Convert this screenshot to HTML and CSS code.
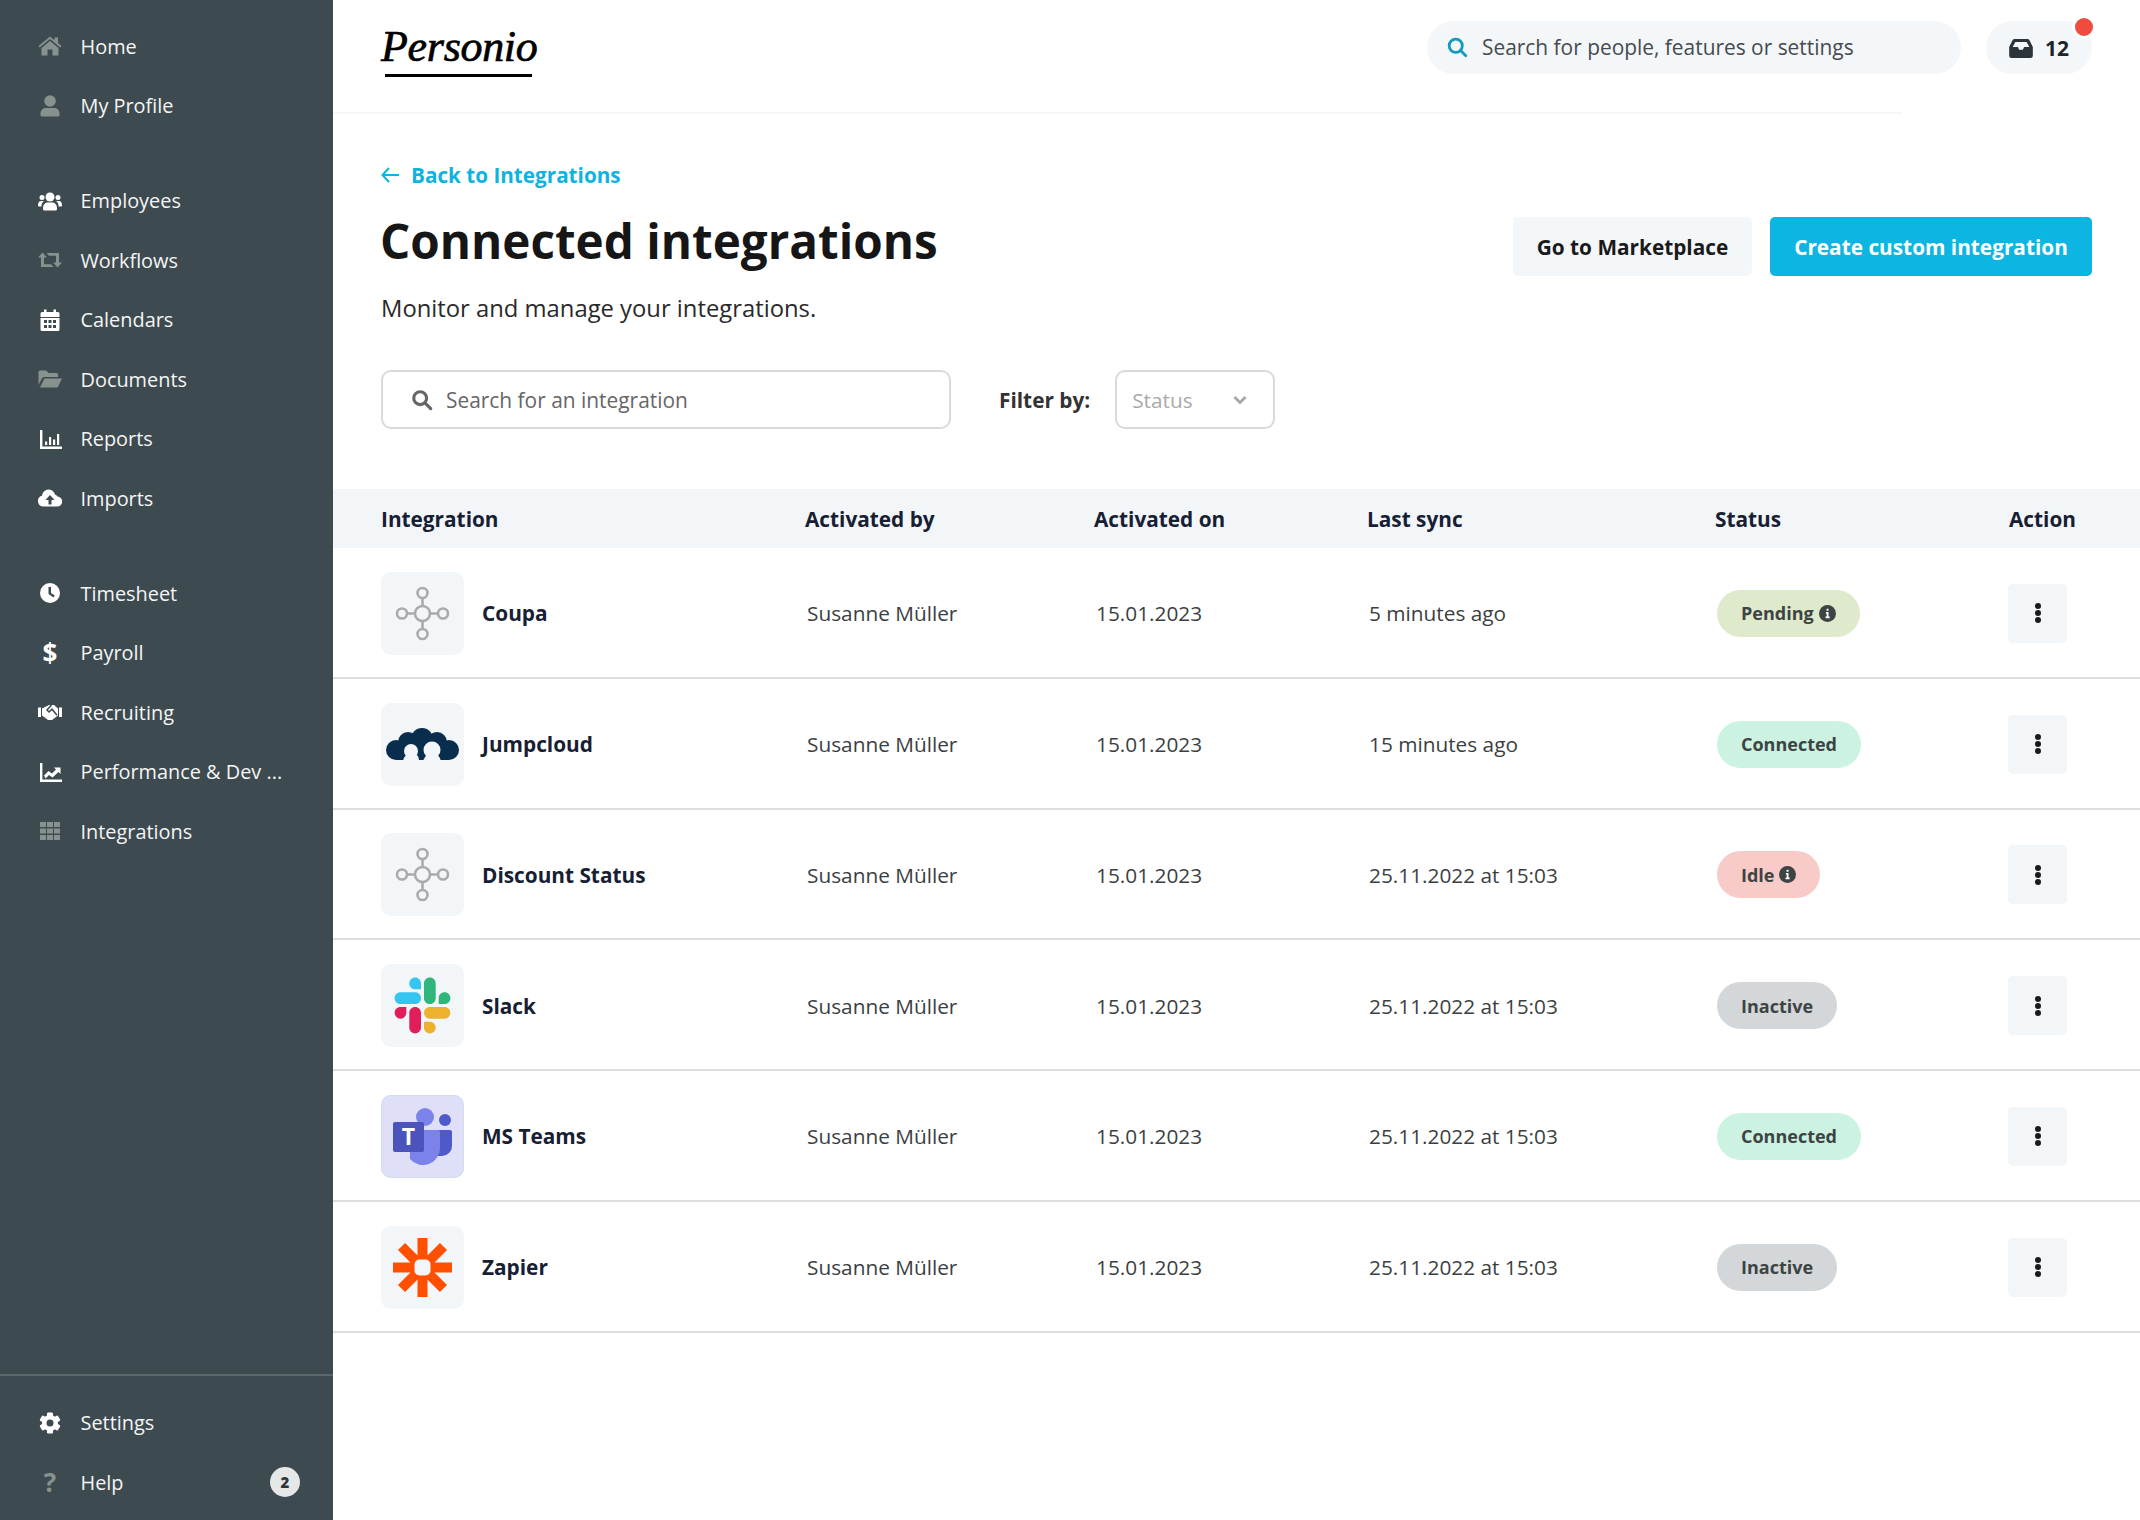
FILE: index.html
```html
<!DOCTYPE html>
<html lang="en">
<head>
<meta charset="utf-8">
<title>Connected integrations</title>
<link rel="stylesheet" href="styles.css">
</head>
<body>
<div class="app">
  <aside class="sidebar">
    <nav class="nav-main">
      <div class="nav-group">
        <a class="nav-item"><svg class="nav-icon dim" viewBox="0 0 24 24"><path d="M12 2.500 0.500 12l1.200 1.500L12 5l10.300 8.500 1.200-1.500-3.500-2.900V3.500h-3.500v2.700z"/><path d="M12 7 3.500 14v7.500h6v-6h5v6h6V14z"/></svg><span>Home</span></a>
        <a class="nav-item"><svg class="nav-icon dim" viewBox="0 0 24 24"><circle cx="12" cy="7" r="5.800"/><path d="M2.500 19.500c0-3.500 2.500-5.500 5.500-5.500h8c3 0 5.500 2 5.500 5.500V21a1.500 1.500 0 0 1-1.500 1.500H4A1.500 1.500 0 0 1 2.500 21z"/></svg><span>My Profile</span></a>
      </div>
      <div class="nav-group">
        <a class="nav-item"><svg class="nav-icon" viewBox="0 0 24 24"><circle cx="12" cy="8" r="4.500"/><circle cx="4" cy="8.500" r="2.500"/><circle cx="20" cy="8.500" r="2.500"/><path d="M5 19.500c0-3.500 2-6 4.500-6h5c2.500 0 4.500 2.500 4.500 6v.5a1.500 1.500 0 0 1-1.500 1.500h-11A1.500 1.500 0 0 1 5 20z"/><path d="M0 16.500c0-3 1-4.500 3-4.500h3a6 6 0 0 0-2.500 5.500H1a1 1 0 0 1-1-1zM24 16.500c0-3-1-4.500-3-4.500h-3a6 6 0 0 1 2.500 5.500H23a1 1 0 0 0 1-1z"/></svg><span>Employees</span></a>
        <a class="nav-item"><svg class="nav-icon dim" viewBox="0 0 24 24"><path d="M4.500 4.500 0 9.500h3v9.500h12.500l-2.500-2.800H6V9.500h3zM19.500 19.500l4.500-5h-3V5H8.500l2.500 2.800h7v6.700h-3z"/></svg><span>Workflows</span></a>
        <a class="nav-item"><svg class="nav-icon" viewBox="0 0 24 24"><path d="M6 1.500h2.500V4h7V1.500H18V4h2a1.500 1.500 0 0 1 1.500 1.500V9h-19V5.500A1.500 1.500 0 0 1 4 4h2z"/><path fill-rule="evenodd" d="M2.500 10h19v11.500A1.500 1.500 0 0 1 20 23H4a1.500 1.500 0 0 1-1.500-1.500zM6 12v3h3v-3zm4.500 0v3h3v-3zm4.500 0v3h3v-3zM6 17v3h3v-3zm4.500 0v3h3v-3zm4.500 0v3h3v-3z"/></svg><span>Calendars</span></a>
        <a class="nav-item"><svg class="nav-icon dim" viewBox="0 0 24 24"><path d="M0.500 5A1.500 1.500 0 0 1 2 3.500h6l2.500 2.500h8A1.500 1.500 0 0 1 20 7.500V10H6.500a3 3 0 0 0-2.700 1.600L0.500 18z"/><path d="M6.500 11.500H24l-4 8.300a1.500 1.500 0 0 1-1.300.7H2z"/></svg><span>Documents</span></a>
        <a class="nav-item"><svg class="nav-icon" viewBox="0 0 24 24"><path d="M2 3h2.400v16.600H24V22H2z"/><path d="M7 14.500h2.200V18H7zM11 10h2.200v8H11zM15 12.500h2.200V18H15zM19 7h2.200v11H19z"/></svg><span>Reports</span></a>
        <a class="nav-item"><svg class="nav-icon" viewBox="0 0 24 24"><path fill-rule="evenodd" d="M10 3.500a7.500 7.500 0 0 1 7 5 5.500 5.500 0 0 1 2.500 2 5 5 0 0 1-.5 10H5.500a5.500 5.500 0 0 1-1.500-10.800A7.500 7.500 0 0 1 10 3.500zM12 9 7.500 14H10.500v4.500h3V14h3z"/></svg><span>Imports</span></a>
      </div>
      <div class="nav-group">
        <a class="nav-item"><svg class="nav-icon" viewBox="0 0 24 24"><path fill-rule="evenodd" d="M12 2a10 10 0 1 1 0 20 10 10 0 0 1 0-20zM10.500 6v7l5 3.500 1.300-2-3.800-2.600V6z"/></svg><span>Timesheet</span></a>
        <a class="nav-item"><span class="nav-icon glyph">$</span><span>Payroll</span></a>
        <a class="nav-item"><svg class="nav-icon" viewBox="0 0 24 24"><path d="M0 7.500h3V17H0zM21 7.500h3V17h-3z"/><path d="M4 8.500 8 6.500 11 5h5l4 3.500v7l-6 4.500h-4l-6-4.500z"/><path class="crease" d="M13.500 5 9 10l2 2 3-2.800 5 6"/></svg><span>Recruiting</span></a>
        <a class="nav-item"><svg class="nav-icon" viewBox="0 0 24 24"><path d="M2 3h2.400v16.600H24V22H2z"/><path d="M6 15.500l4.500-4.500 3.500 2.500 4-4-2-2h6.500V14l-2-2-6 5.500-3.500-2.500-3.500 3.500z"/></svg><span>Performance &amp; Dev ...</span></a>
        <a class="nav-item"><svg class="nav-icon dim" viewBox="0 0 24 24"><path d="M2 3h6v5H2zM9 3h6v5H9zM16 3h6v5h-6zM2 9.500h6v5H2zM9 9.500h6v5H9zM16 9.500h6v5h-6zM2 16h6v5H2zM9 16h6v5H9zM16 16h6v5h-6z"/></svg><span>Integrations</span></a>
      </div>
    </nav>
    <div class="nav-bottom">
      <a class="nav-item"><svg class="nav-icon" viewBox="0 0 24 24"><g><rect x="9" y="1.500" width="6" height="21" rx="1.200"/><rect x="9" y="1.500" width="6" height="21" rx="1.200" transform="rotate(60 12 12)"/><rect x="9" y="1.500" width="6" height="21" rx="1.200" transform="rotate(120 12 12)"/></g><circle cx="12" cy="12" r="8"/><circle class="hole" cx="12" cy="12" r="3.500"/></svg><span>Settings</span></a>
      <a class="nav-item"><span class="nav-icon glyph dim-text">?</span><span>Help</span><span class="nav-badge">2</span></a>
    </div>
  </aside>

  <main class="main">
    <header class="topbar">
      <div class="logo">
        <span class="logo-word">Personio</span>
        <span class="logo-line"></span>
      </div>
      <div class="top-right">
        <div class="global-search">
          <svg class="global-search-icon" viewBox="0 0 24 24"><circle cx="10" cy="10" r="7.500"/><path d="M15.500 15.500 21.500 21.500"/></svg>
          <span>Search for people, features or settings</span>
        </div>
        <div class="inbox">
          <svg class="inbox-icon" viewBox="0 0 26 22"><path fill-rule="evenodd" d="M6 1h14a2.500 2.500 0 0 1 2.200 1.300L26 10v9.500a2.500 2.500 0 0 1-2.500 2.500h-21A2.500 2.500 0 0 1 0 19.500V10l3.800-7.700A2.500 2.500 0 0 1 6 1zm.8 3.500L3.800 10h5.700l1.500 3h4l1.500-3h5.700l-3-5.500z"/></svg>
          <span>12</span>
          <span class="inbox-dot"></span>
        </div>
      </div>
    </header>
    <div class="top-divider"></div>

    <section class="page-head">
      <a class="back-link">
        <svg class="back-icon" viewBox="0 0 18 16"><path d="M8 1 1.500 8 8 15M1.500 8H18"/></svg>
        <span>Back to Integrations</span>
      </a>
      <div class="title-row">
        <div>
          <h1 class="title">Connected integrations</h1>
          <p class="subtitle">Monitor and manage your integrations.</p>
        </div>
        <div class="actions">
          <a class="btn btn-light">Go to Marketplace</a>
          <a class="btn btn-primary">Create custom integration</a>
        </div>
      </div>
      <div class="filters">
        <div class="search-field">
          <svg class="search-field-icon" viewBox="0 0 24 24"><circle cx="10" cy="10" r="7"/><path d="M15.500 15.500 21.500 21.500"/></svg>
          <span>Search for an integration</span>
        </div>
        <span class="filter-label">Filter by:</span>
        <div class="select">
          <span>Status</span>
          <svg class="chevron" viewBox="0 0 14 10"><path d="M1.500 2 7 7.500 12.500 2"/></svg>
        </div>
      </div>
    </section>

    <section class="table">
      <div class="row row-head">
        <div>Integration</div>
        <div>Activated by</div>
        <div>Activated on</div>
        <div>Last sync</div>
        <div>Status</div>
        <div class="head-action">Action</div>
      </div>

      <div class="row">
        <div class="cell-name"><span class="logo-box"><svg viewBox="0 0 83 83"><g class="hub"><circle cx="41.500" cy="41.500" r="7.500"/><circle cx="41.500" cy="21" r="5"/><circle cx="41.500" cy="62" r="5"/><circle cx="21" cy="41.500" r="5"/><circle cx="62" cy="41.500" r="5"/><path d="M41.500 26v8M41.500 49v8M26 41.500h8M49 41.500h8"/></g></svg></span><span>Coupa</span></div>
        <div class="cell">Susanne Müller</div>
        <div class="cell">15.01.2023</div>
        <div class="cell">5 minutes ago</div>
        <div class="cell"><span class="pill pill-pending">Pending<svg class="info" viewBox="0 0 18 18"><circle cx="9" cy="9" r="9"/><path class="info-i" d="M7.300 7.300h2.800v5h1.200v1.600H6.900v-1.600h1.200V9H7.300zM8 3.900h2.100V6H8z"/></svg></span></div>
        <div class="cell-action"><a class="kebab"><i></i><i></i><i></i></a></div>
      </div>

      <div class="row">
        <div class="cell-name"><span class="logo-box"><svg viewBox="0 0 83 83"><g class="cloud"><circle cx="15" cy="47" r="10"/><circle cx="68" cy="47" r="10"/><circle cx="27" cy="39" r="10"/><circle cx="41" cy="36" r="11"/><circle cx="56" cy="39" r="10"/><rect x="15" y="38" width="53" height="19"/></g><g class="cloud-cut"><circle cx="30" cy="48" r="7"/><circle cx="51" cy="47" r="8.500"/><path d="M22 60c0-6 3-9 8-9s7 1 9 5l3 4zM40 60l3-4c2-4 4-6 8-6s9 3 9 10z"/></g><path class="cloud-neck" d="M37 52h6l-1 5h-4z"/></svg></span><span>Jumpcloud</span></div>
        <div class="cell">Susanne Müller</div>
        <div class="cell">15.01.2023</div>
        <div class="cell">15 minutes ago</div>
        <div class="cell"><span class="pill pill-connected">Connected</span></div>
        <div class="cell-action"><a class="kebab"><i></i><i></i><i></i></a></div>
      </div>

      <div class="row">
        <div class="cell-name"><span class="logo-box"><svg viewBox="0 0 83 83"><g class="hub"><circle cx="41.500" cy="41.500" r="7.500"/><circle cx="41.500" cy="21" r="5"/><circle cx="41.500" cy="62" r="5"/><circle cx="21" cy="41.500" r="5"/><circle cx="62" cy="41.500" r="5"/><path d="M41.500 26v8M41.500 49v8M26 41.500h8M49 41.500h8"/></g></svg></span><span>Discount Status</span></div>
        <div class="cell">Susanne Müller</div>
        <div class="cell">15.01.2023</div>
        <div class="cell">25.11.2022 at 15:03</div>
        <div class="cell"><span class="pill pill-idle">Idle<svg class="info" viewBox="0 0 18 18"><circle cx="9" cy="9" r="9"/><path class="info-i" d="M7.300 7.300h2.800v5h1.200v1.600H6.900v-1.600h1.200V9H7.300zM8 3.900h2.100V6H8z"/></svg></span></div>
        <div class="cell-action"><a class="kebab"><i></i><i></i><i></i></a></div>
      </div>

      <div class="row">
        <div class="cell-name"><span class="logo-box"><svg viewBox="-30 -30 182.800 182.800"><path fill="#E01E5A" d="M25.800 77.600c0 7.100-5.800 12.900-12.900 12.900S0 84.700 0 77.600s5.800-12.900 12.900-12.900h12.900v12.900zm6.500 0c0-7.100 5.800-12.900 12.900-12.900s12.900 5.800 12.900 12.900v32.300c0 7.100-5.800 12.900-12.900 12.900s-12.900-5.800-12.900-12.900V77.600z"/><path fill="#36C5F0" d="M45.200 25.800c-7.100 0-12.900-5.800-12.900-12.900S38.100 0 45.200 0s12.900 5.800 12.900 12.900v12.900H45.200zm0 6.500c7.100 0 12.900 5.800 12.900 12.900s-5.800 12.900-12.900 12.900H12.900C5.800 58.100 0 52.300 0 45.200s5.800-12.900 12.900-12.900h32.300z"/><path fill="#2EB67D" d="M97 45.200c0-7.100 5.800-12.900 12.900-12.900s12.900 5.800 12.900 12.900-5.800 12.900-12.900 12.900H97V45.200zm-6.500 0c0 7.100-5.800 12.900-12.900 12.900s-12.900-5.800-12.900-12.900V12.900C64.700 5.800 70.500 0 77.600 0s12.900 5.800 12.900 12.900v32.300z"/><path fill="#ECB22E" d="M77.600 97c7.100 0 12.900 5.800 12.900 12.900s-5.800 12.900-12.900 12.900-12.900-5.800-12.900-12.900V97h12.900zm0-6.500c-7.100 0-12.900-5.800-12.900-12.900s5.800-12.900 12.900-12.900h32.300c7.100 0 12.900 5.800 12.900 12.900s-5.800 12.900-12.900 12.900H77.600z"/></svg></span><span>Slack</span></div>
        <div class="cell">Susanne Müller</div>
        <div class="cell">15.01.2023</div>
        <div class="cell">25.11.2022 at 15:03</div>
        <div class="cell"><span class="pill pill-inactive">Inactive</span></div>
        <div class="cell-action"><a class="kebab"><i></i><i></i><i></i></a></div>
      </div>

      <div class="row">
        <div class="cell-name"><span class="logo-box logo-box-teams"><svg viewBox="0 0 83 83"><circle cx="64" cy="25" r="6" fill="#5059C9"/><path fill="#5059C9" d="M54 35h15a2 2 0 0 1 2 2v14a10 10 0 0 1-10 10h-7z"/><circle cx="44" cy="22" r="9" fill="#7B83EB"/><path fill="#7B83EB" d="M29 35h28a2 2 0 0 1 2 2v16a17 17 0 0 1-30 11z"/><path fill="#4B53BC" d="M14 27h27a2 2 0 0 1 2 2v26a2 2 0 0 1-2 2H14a2 2 0 0 1-2-2V29a2 2 0 0 1 2-2z"/><text class="teams-t" x="27.500" y="50" text-anchor="middle">T</text></svg></span><span>MS Teams</span></div>
        <div class="cell">Susanne Müller</div>
        <div class="cell">15.01.2023</div>
        <div class="cell">25.11.2022 at 15:03</div>
        <div class="cell"><span class="pill pill-connected">Connected</span></div>
        <div class="cell-action"><a class="kebab"><i></i><i></i><i></i></a></div>
      </div>

      <div class="row">
        <div class="cell-name"><span class="logo-box"><svg viewBox="0 0 83 83"><path class="zap" d="M41.500 12v59M12 41.500h59M20.500 20.500l42 42M62.500 20.500l-42 42"/><rect class="zap-hole" x="33.500" y="33.500" width="16" height="16" rx="5"/></svg></span><span>Zapier</span></div>
        <div class="cell">Susanne Müller</div>
        <div class="cell">15.01.2023</div>
        <div class="cell">25.11.2022 at 15:03</div>
        <div class="cell"><span class="pill pill-inactive">Inactive</span></div>
        <div class="cell-action"><a class="kebab"><i></i><i></i><i></i></a></div>
      </div>
    </section>
  </main>
</div>
</body>
</html>
```

FILE: styles.css
```css
* { box-sizing: border-box; }
html, body { margin: 0; padding: 0; }
body {
  width: 2140px;
  height: 1520px;
  overflow: hidden;
  background: #fff;
  color: #1a1a1a;
  font-family: "Open Sans", "Liberation Sans", sans-serif;
}
.app { display: flex; height: 1520px; }

/* Sidebar */
.sidebar {
  width: 333px;
  flex: none;
  display: flex;
  flex-direction: column;
  background: #3d4a4f;
  color: #fff;
}
.nav-main { padding-top: 16.500px; display: flex; flex-direction: column; gap: 35.500px; }
.nav-item {
  display: flex;
  align-items: center;
  gap: 18.500px;
  height: 59.500px;
  padding-left: 38px;
  font-size: 19.900px;
  font-weight: 500;
  color: #f4f5f5;
}
.nav-icon { width: 24px; height: 24px; flex: none; fill: #fff; }
.nav-icon.dim { fill: #87928f; }
.nav-icon .hole { fill: #3d4a4f; }
.nav-icon .crease { fill: none; stroke: #3d4a4f; stroke-width: 1.500; }
.glyph { font-size: 26px; line-height: 24px; font-weight: 700; text-align: center; color: #fff; }
.dim-text { color: #87928f; }
.nav-bottom {
  margin-top: auto;
  border-top: 2px solid #5a686c;
  padding: 17px 0 8px;
}
.nav-badge {
  margin-left: auto;
  margin-right: 33px;
  width: 30px;
  height: 30px;
  border-radius: 50%;
  background: #e6e7e7;
  color: #2d3639;
  font-size: 15px;
  font-weight: 800;
  display: flex;
  align-items: center;
  justify-content: center;
}

/* Main */
.main { flex: 1; min-width: 0; display: flex; flex-direction: column; }
.topbar {
  height: 112px;
  padding: 21px 48px 0;
  display: flex;
  justify-content: space-between;
  align-items: flex-start;
}
.logo { display: flex; flex-direction: column; align-items: flex-start; margin-top: 1px; }
.logo-word {
  font-family: "Liberation Serif", serif;
  font-style: italic;
  font-size: 44px;
  line-height: 50px;
  letter-spacing: -0.300px;
  -webkit-text-stroke: 0.700px #000;
  color: #000;
}
.logo-line { width: 147px; height: 3px; background: #000; margin: 2px 0 0 4px; }
.top-right { display: flex; gap: 25px; }
.global-search {
  width: 534px;
  height: 53px;
  border-radius: 27px;
  background: #f4f7f9;
  display: flex;
  align-items: center;
  gap: 14px;
  padding-left: 20px;
  padding-bottom: 1px;
  font-size: 20.900px;
  color: #454b4f;
}
.global-search-icon { width: 21px; height: 21px; fill: none; stroke: #129bbd; stroke-width: 3.200; stroke-linecap: round; }
.inbox {
  position: relative;
  width: 106px;
  height: 53px;
  border-radius: 27px;
  background: #f4f7f9;
  display: flex;
  align-items: center;
  gap: 12px;
  padding-left: 23px;
  font-size: 21px;
  font-weight: 700;
  color: #1d2528;
}
.inbox-icon { width: 24px; height: 20px; fill: #2a343a; }
.inbox-dot {
  position: absolute;
  top: -6px;
  right: -4px;
  width: 24px;
  height: 24px;
  border: 3px solid #fff;
  border-radius: 50%;
  background: #ef4b3e;
}
.top-divider { width: 1569px; height: 2px; background: #f4f6f8; }

.page-head { padding: 0 48px; }
.back-link {
  display: flex;
  align-items: center;
  gap: 12px;
  margin-top: 46px;
  height: 30px;
  font-size: 20.700px;
  font-weight: 700;
  color: #0fb3df;
}
.back-icon { width: 18px; height: 16px; fill: none; stroke: #0fb3df; stroke-width: 2; }
.title-row { display: flex; justify-content: space-between; align-items: flex-start; margin-top: 18px; }
.title { margin: 0 0 0 -1px; font-size: 47.600px; line-height: 66px; font-weight: 700; color: #161616; }
.subtitle { margin: 17.500px 0 0; font-size: 23.800px; line-height: 32px; color: #2a2a2a; }
.actions { display: flex; gap: 18px; margin-top: 9px; }
.btn {
  height: 59px;
  border-radius: 5px;
  display: flex;
  align-items: center;
  justify-content: center;
  font-size: 20.800px;
  font-weight: 700;
}
.btn-light { width: 239px; background: #f4f7f9; color: #1a1a1a; }
.btn-primary { width: 322px; background: #0db5e2; color: #fff; }

.filters { display: flex; align-items: center; margin-top: 46.500px; }
.search-field {
  width: 570px;
  height: 59px;
  border: 2px solid #dadada;
  border-radius: 10px;
  display: flex;
  align-items: center;
  gap: 13px;
  padding-left: 28px;
  font-size: 20.900px;
  color: #666;
}
.search-field-icon { width: 22px; height: 22px; fill: none; stroke: #666; stroke-width: 3.400; stroke-linecap: round; }
.filter-label { margin-left: 48px; font-size: 20.800px; font-weight: 700; color: #333; }
.select {
  margin-left: 25px;
  width: 160px;
  height: 59px;
  border: 2px solid #dadada;
  border-radius: 10px;
  display: flex;
  align-items: center;
  justify-content: space-between;
  padding: 0 26px 0 15px;
  font-size: 20.800px;
  color: #a9a9a9;
}
.chevron { width: 14px; height: 10px; fill: none; stroke: #a9a9a9; stroke-width: 3; }

/* Table */
.table { margin-top: 60px; }
.row {
  display: grid;
  grid-template-columns: 472px 289px 273px 348px 293px 132px;
  align-items: center;
  height: 130.750px;
  padding-top: 2px;
  border-bottom: 2px solid #dddddd;
  font-size: 20.800px;
  color: #3b3f42;
}
.row > :first-child { padding-left: 48px; }
.row-head {
  height: 59px;
  padding-top: 0;
  background: #f3f6f9;
  border-bottom: 0;
  font-weight: 700;
  color: #172033;
}
.head-action { padding-left: 1px; }
.cell { padding-left: 2px; }
.cell-name { display: flex; align-items: center; gap: 18px; font-weight: 700; color: #172033; }
.logo-box { width: 83px; height: 83px; border-radius: 10px; background: #f3f6f9; flex: none; }
.logo-box svg { display: block; width: 83px; height: 83px; }
.logo-box-teams { background: #dfe0f8; box-shadow: inset 0 0 0 1px #d3dcef; }
.hub { fill: none; stroke: #ababab; stroke-width: 2.600; }
.cloud { fill: #092d4d; }
.cloud-cut { fill: #f3f6f9; }
.cloud-neck { fill: #092d4d; }
.teams-t { font-family: "Open Sans", sans-serif; font-size: 23px; font-weight: 700; fill: #fff; }
.zap { fill: none; stroke: #ff4f00; stroke-width: 10; }
.zap-hole { fill: #f3f6f9; }

.pill {
  display: inline-flex;
  align-items: center;
  gap: 5px;
  height: 47px;
  padding: 0 24px;
  border-radius: 24px;
  font-size: 18px;
  font-weight: 700;
  color: #3d4443;
}
.pill-pending { background: #dfeacc; }
.pill-connected { background: #ccf3e1; }
.pill-idle { background: #f9cbc8; }
.pill-inactive { background: #d3d7da; }
.info { width: 17px; height: 17px; fill: #3d4443; }
.info-i { fill: #fff; }

.kebab {
  width: 59px;
  height: 59px;
  border-radius: 5px;
  background: #f3f6f9;
  display: flex;
  flex-direction: column;
  align-items: center;
  justify-content: center;
  gap: 1px;
}
.kebab i { display: block; width: 6px; height: 6px; border-radius: 50%; background: #1a1a1a; }
```
